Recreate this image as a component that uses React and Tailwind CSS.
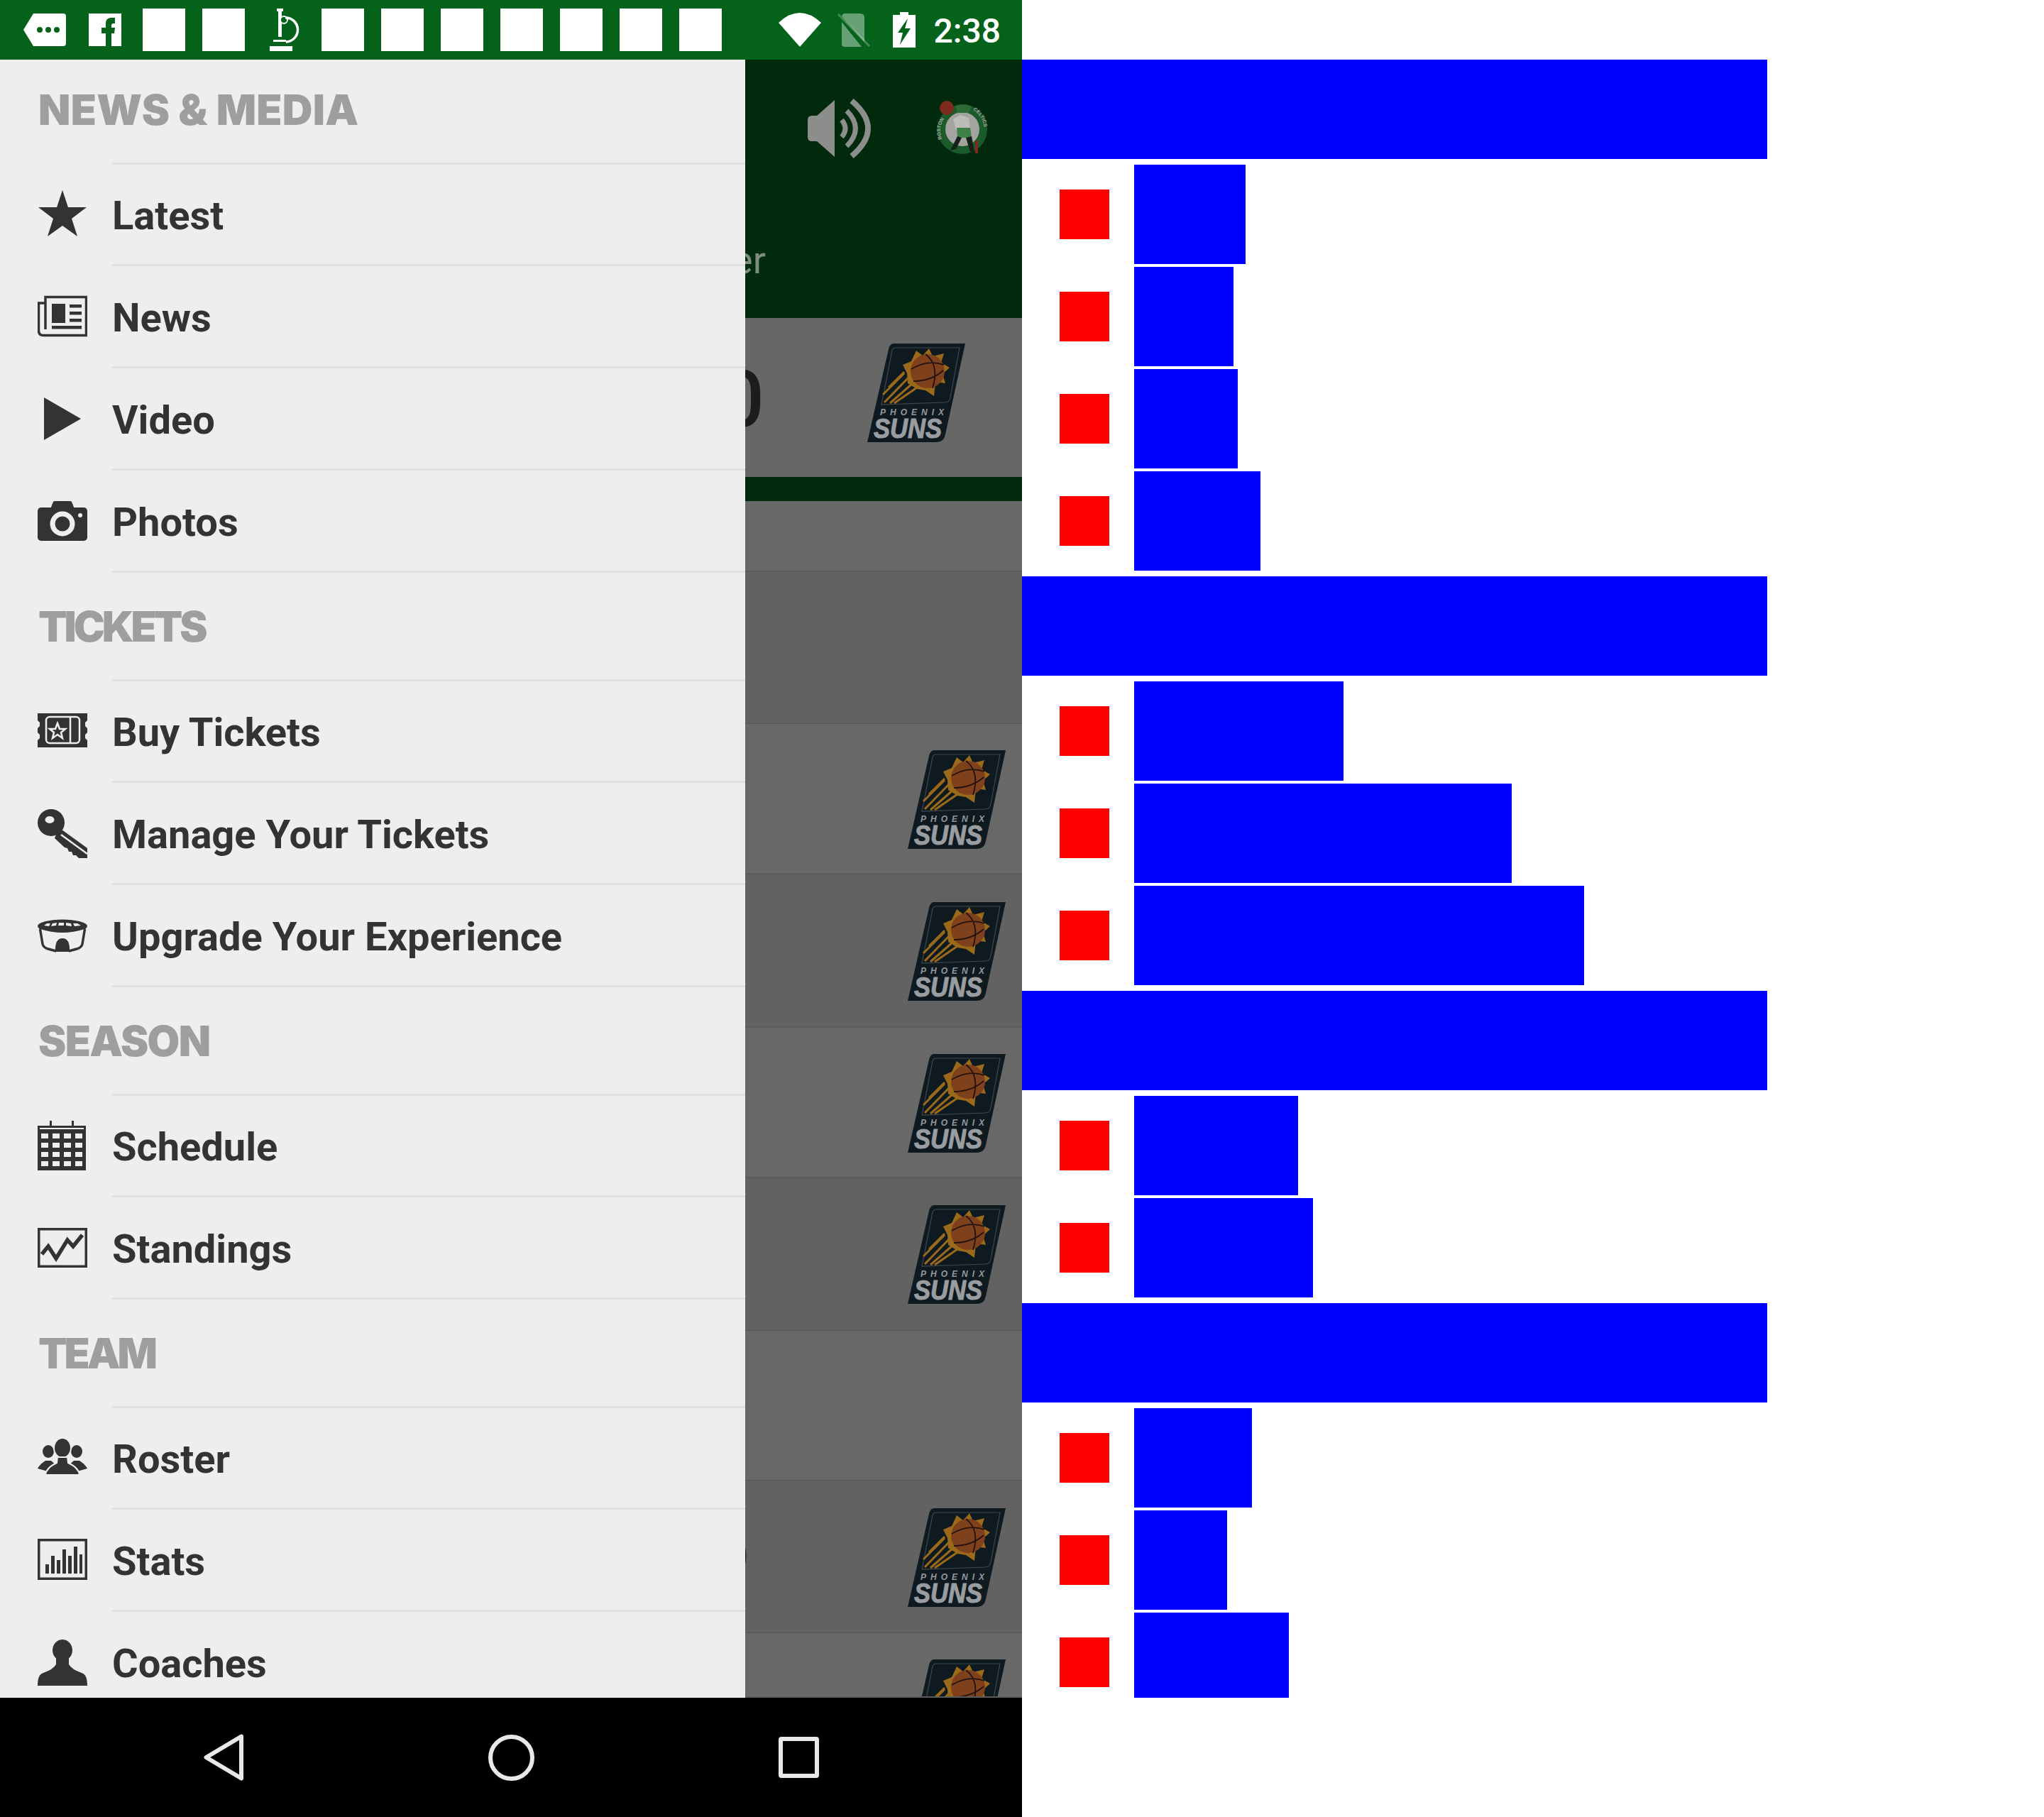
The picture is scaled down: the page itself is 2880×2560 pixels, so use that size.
const drawerSections = [
  {
    title: "NEWS & MEDIA",
    titleClass: "tracking-[0.3px]",
    items: [
      { label: "Latest", icon: "star" },
      { label: "News", icon: "news" },
      { label: "Video", icon: "play" },
      { label: "Photos", icon: "camera" },
    ],
  },
  {
    title: "TICKETS",
    titleClass: "tracking-[-4px]",
    items: [
      { label: "Buy Tickets", icon: "ticket" },
      { label: "Manage Your Tickets", icon: "key" },
      { label: "Upgrade Your Experience", icon: "stadium" },
    ],
  },
  {
    title: "SEASON",
    titleClass: "tracking-[-1.6px]",
    items: [
      { label: "Schedule", icon: "calendar" },
      { label: "Standings", icon: "chart" },
    ],
  },
  {
    title: "TEAM",
    titleClass: "tracking-[-4px]",
    items: [
      { label: "Roster", icon: "roster" },
      { label: "Stats", icon: "stats" },
      { label: "Coaches", icon: "coach" },
    ],
  },
];

// widths of the overlay bars, one list per section
const overlayWidths = [
  [157, 140, 146, 178],
  [295, 532, 634],
  [231, 252],
  [166, 131, 218],
];

const listRows = [
  { h: "h-[100px]", bg: "bg-[#686868]" },
  { h: "h-[214px]", bg: "bg-[#626262]" },
  { h: "h-[212px]", bg: "bg-[#686868]", logo: true },
  { h: "h-[216px]", bg: "bg-[#626262]", logo: true },
  { h: "h-[212px]", bg: "bg-[#686868]", logo: true },
  { h: "h-[215px]", bg: "bg-[#626262]", logo: true },
  { h: "h-[212px]", bg: "bg-[#686868]" },
  { h: "h-[214px]", bg: "bg-[#626262]", logo: true, sliver: true },
  { h: "h-[91px]", bg: "bg-[#686868]", logo: true, clipped: true },
];

const INK = "#333333";
const BG = "#eeeeee";

function DrawerIcon({ name }) {
  const calendarCells = [];
  [18, 31, 44, 57].forEach((y) =>
    [5, 21, 37, 53].forEach((x) => calendarCells.push([x, y]))
  );

  return (
    <svg viewBox="0 0 70 70" className="w-[70px] h-[70px] shrink-0" fill={INK}>
      {name === "star" && (
        <polygon points="35,1 43,25 69,25 48,41 56,66 35,51 14,66 22,41 1,25 27,25" />
      )}
      {name === "news" && (
        <g>
          <path d="M11 16V7.500H68.500V61.500H8Q1.500 61.500 1.500 55V16H11V53" fill="none" stroke={INK} strokeWidth="3.500" />
          <rect x="20" y="17" width="19" height="27" />
          <rect x="45" y="18" width="17" height="4.500" />
          <rect x="45" y="28" width="17" height="4.500" />
          <rect x="45" y="38" width="17" height="4.500" />
          <rect x="20" y="48" width="42" height="4.500" />
        </g>
      )}
      {name === "play" && <polygon points="9,5 61,35 9,65" />}
      {name === "camera" && (
        <g>
          <rect x="0" y="16" width="70" height="47" rx="5" />
          <path d="M18 18L22 8Q22.500 7 24 7H46Q47.500 7 48 8L52 18Z" />
          <circle cx="35" cy="39" r="14" fill="none" stroke={BG} strokeWidth="7" />
          <circle cx="60" cy="27" r="3" fill={BG} />
        </g>
      )}
      {name === "ticket" && (
        <g>
          <path d="M0 10H70V20L67 23V28L70 31V37L67 40V45L70 48V58H0V48L3 45V40L0 37V31L3 28V23L0 20Z" />
          <rect x="12" y="15" width="47" height="37" rx="5" fill="none" stroke={BG} strokeWidth="2.500" />
          <path d="M46 15V52" stroke={BG} strokeWidth="2.500" />
          <polygon points="28,24 31,32 39,32 33,37 35,45 28,40 21,45 23,37 17,32 25,32" fill="none" stroke={BG} strokeWidth="2.500" />
        </g>
      )}
      {name === "key" && (
        <g>
          <ellipse cx="19" cy="20" rx="19" ry="19" />
          <path d="M30 27L70 56V70H58L54 66L50 66L48 61L44 61L42 56L38 55L24 42Z" />
          <ellipse cx="17" cy="16" rx="6.500" ry="5" fill={BG} />
          <path d="M33 37L70 64" stroke={BG} strokeWidth="2.500" />
        </g>
      )}
      {name === "stadium" && (
        <g>
          <ellipse cx="35" cy="22" rx="35" ry="9.500" />
          <path d="M9 21L13 18H18L16 22ZM21 18L27 17L26 21L19 22ZM30 17H37L37 21H29ZM40 17L47 18L48 22L40 21ZM50 18H56L61 21L52 22Z" fill={BG} />
          <path d="M4 26Q35 36 66 26L64 29Q35 38 6 29Z" fill={BG} />
          <path d="M3.500 26L7 47Q8 52 15 54L26 57M66.500 26L63 47Q62 52 55 54L44 57" fill="none" stroke={INK} strokeWidth="3.500" />
          <path d="M25 58Q24 39 35 39Q46 39 45 58Z" />
        </g>
      )}
      {name === "calendar" && (
        <g>
          <rect x="17" y="0" width="3" height="10" />
          <rect x="48" y="0" width="3" height="10" />
          <rect x="0" y="7" width="68" height="63" />
          <rect x="3" y="10" width="62" height="2" fill={BG} />
          {calendarCells.map(([x, y]) => (
            <rect key={`${x}-${y}`} x={x} y={y} width="10" height="7" fill={BG} />
          ))}
        </g>
      )}
      {name === "chart" && (
        <g>
          <rect x="1.750" y="8.750" width="66.500" height="52.500" fill="none" stroke={INK} strokeWidth="3.500" />
          <polyline points="6,44 15,33 26,50 42,24 50,33 63,17" fill="none" stroke={INK} strokeWidth="5.500" />
        </g>
      )}
      {name === "roster" && (
        <g>
          <ellipse cx="15" cy="26" rx="8" ry="9" />
          <ellipse cx="55" cy="26" rx="8" ry="9" />
          <path d="M0 50Q3 44 11 39L19 39L27 46L14 54Z" />
          <path d="M70 50Q67 44 59 39L51 39L43 46L56 54Z" />
          <ellipse cx="35" cy="21" rx="12" ry="14" stroke={BG} strokeWidth="2" />
          <path d="M11 59Q12 49 27 42L28 34H42L43 42Q58 49 59 59Z" stroke={BG} strokeWidth="2" />
        </g>
      )}
      {name === "stats" && (
        <g>
          <rect x="1.750" y="6.750" width="66.500" height="54.500" fill="none" stroke={INK} strokeWidth="3.500" />
          <rect x="11" y="41" width="5" height="13" />
          <rect x="19" y="29" width="5" height="25" />
          <rect x="27" y="35" width="5" height="19" />
          <rect x="35" y="20" width="5" height="34" />
          <rect x="43" y="29" width="5" height="25" />
          <rect x="51" y="16" width="5" height="38" />
          <rect x="59" y="27" width="4" height="27" />
        </g>
      )}
      {name === "coach" && (
        <g>
          <ellipse cx="35" cy="18" rx="14" ry="15" />
          <path d="M26 28V38Q22 45 8 50Q0 52 0 68H70Q70 52 62 50Q48 45 44 38V28Z" />
        </g>
      )}
    </svg>
  );
}

function SectionDivider() {
  return <div className="ml-[157px] h-[3px] bg-[#e1e1e1]" />;
}

function Drawer() {
  return (
    <div className="w-[1050px] bg-[#eeeeee] overflow-hidden shrink-0">
      {drawerSections.map((section) => (
        <section key={section.title} className="pb-1">
          <h2 className={`h-[140px] mb-[5px] pl-[54px] pt-[2px] flex items-center font-['Inter',sans-serif] font-black text-[59px] text-[#9e9e9e] whitespace-nowrap ${section.titleClass}`}>
            {section.title}
          </h2>
          <SectionDivider />
          {section.items.map((item) => (
            <div key={item.label} className="pb-px">
              <div className="h-[140px] pl-[53px] flex items-center">
                <DrawerIcon name={item.icon} />
                <span className="ml-[35px] pt-[3px] font-['Roboto',sans-serif] font-bold text-[56px] text-[#333333] whitespace-nowrap">
                  {item.label}
                </span>
              </div>
              <SectionDivider />
            </div>
          ))}
        </section>
      ))}
    </div>
  );
}

function SunsLogo() {
  return (
    <svg viewBox="0 0 138 140" className="w-[138px] h-[140px] shrink-0">
      <path d="M37 0H138L110 128Q108 139 98 139H0L30 8Q32 0 37 0Z" fill="#0f1a20" />
      <path d="M40 6H130L117 76Q116 83 109 83L20 86L35 10Q36 6 40 6Z" fill="none" stroke="#3e484d" strokeWidth="1.200" />
      <path d="M24 83L58 48M32 84L64 56M22 72L52 42M38 84L70 62M30 62L52 40" stroke="#9a6a1a" strokeWidth="3" />
      <polygon points="69,10 78,17 87,7 92,18 108,14 104,27 116,34 106,43 110,56 96,54 94,74 82,66 70,64 57,56 56,42 50,30 62,25" fill="#9a6a1a" />
      <circle cx="85" cy="39" r="24" fill="#7f411b" />
      <path d="M62 36Q85 22 108 30M65 53Q90 53 107 38M82 15Q102 30 92 63" fill="none" stroke="#241210" strokeWidth="1.800" />
      <text x="18" y="101" textLength="90" lengthAdjust="spacing" fontFamily="'Liberation Sans', sans-serif" fontStyle="italic" fontWeight="700" fontSize="12" fill="#94989b">
        PHOENIX
      </text>
      <text x="9" y="133" textLength="96" lengthAdjust="spacingAndGlyphs" fontFamily="'Liberation Sans', sans-serif" fontStyle="italic" fontWeight="700" fontSize="38" fill="#999da0" stroke="#999da0" strokeWidth="1">
        SUNS
      </text>
    </svg>
  );
}

function CelticsLogo() {
  return (
    <svg viewBox="0 0 74 76" className="w-[74px] h-[76px] shrink-0">
      <circle cx="37" cy="40" r="35" fill="#1b5a2b" />
      <circle cx="37" cy="40" r="24" fill="#a3a49f" />
      <circle cx="15" cy="10" r="10" fill="#7d2a1f" />
      <path d="M27 8Q38 2 50 8L46 17H30Z" fill="#2c6b36" />
      <path d="M24 26L34 20L46 24L48 40L28 42Z" fill="#bdbcb6" />
      <path d="M29 38H48L50 52H30Z" fill="#3f8046" />
      <path d="M30 50L36 52L28 68L20 70ZM42 52L50 50L54 72L48 72Z" fill="#15201a" />
      <path id="celtics-arc-left" d="M8 54A31 31 0 0 1 14 22" fill="none" />
      <path id="celtics-arc-right" d="M52 13A31 31 0 0 1 67 44" fill="none" />
      <text fontFamily="'Liberation Sans', sans-serif" fontWeight="700" fontSize="7" fill="#a5a8a2">
        <textPath href="#celtics-arc-left">BOSTON</textPath>
      </text>
      <text fontFamily="'Liberation Sans', sans-serif" fontWeight="700" fontSize="7" fill="#a5a8a2">
        <textPath href="#celtics-arc-right">CELTICS</textPath>
      </text>
      <rect x="55" y="56" width="4" height="18" fill="#7d2a1f" />
    </svg>
  );
}

function Speaker() {
  return (
    <svg viewBox="0 0 90 84" className="w-[90px] h-[84px] shrink-0">
      <path d="M0 30Q0 24 6 24H13L38 2V82L13 60H6Q0 60 0 54Z" fill="#8b8e8b" />
      <path d="M48 30Q58 42 48 54" fill="none" stroke="#8b8e8b" strokeWidth="7" />
      <path d="M55 17Q80 42 55 67" fill="none" stroke="#8b8e8b" strokeWidth="7" />
      <path d="M62 3Q108 42 62 81" fill="none" stroke="#8b8e8b" strokeWidth="8" />
    </svg>
  );
}

function ClippedText({ width, children, className }) {
  return (
    <div className={`${width} flex justify-end overflow-hidden`}>
      <span className={`shrink-0 whitespace-nowrap font-['Roboto',sans-serif] ${className}`}>{children}</span>
    </div>
  );
}

function BackScreen() {
  return (
    <div className="flex-1 flex flex-col overflow-hidden">
      <div className="h-[364px] bg-[#012a0c] shrink-0">
        <div className="h-[139px] pt-[55px] pl-[88px] flex items-start">
          <Speaker />
          <div className="ml-[91px] mt-[3px]">
            <CelticsLogo />
          </div>
        </div>
        <div className="mt-[112px]">
          <ClippedText width="w-[29px]" className="text-[54px] leading-[64px] text-[#7d8e81]">
            er
          </ClippedText>
        </div>
      </div>
      <div className="h-[224px] bg-[#676767] shrink-0 flex items-center justify-between pr-[80px]">
        <div className="pt-[6px]">
          <ClippedText width="w-[27px]" className="text-[112px] leading-[120px] font-medium text-[#1c1c1c]">
            0
          </ClippedText>
        </div>
        <div className="pb-[12px]">
          <SunsLogo />
        </div>
      </div>
      <div className="h-[34px] bg-[#012a0c] shrink-0" />
      {listRows.map((row, index) => (
        <div
          key={index}
          className={`${row.h} ${row.bg} shrink-0 border-b-2 border-[#5b5b5b] flex justify-between overflow-hidden ${row.clipped ? "items-start pt-[37px]" : "items-center"}`}
        >
          <div>
            {row.sliver && (
              <ClippedText width="w-[4px]" className="text-[48px] leading-[56px] text-[#1c1c1c]">
                0
              </ClippedText>
            )}
          </div>
          {row.logo && (
            <div className={row.clipped ? "pr-[23px]" : "pr-[23px] pt-[3px]"}>
              <SunsLogo />
            </div>
          )}
        </div>
      ))}
    </div>
  );
}

function StatusBar() {
  const green = "#04621b";
  return (
    <div className="h-[84px] bg-[#04621b] flex items-center justify-between pl-[33px] pr-[30px] shrink-0">
      <div className="flex items-center gap-6">
        <svg viewBox="0 0 60 46" className="w-[60px] h-[46px]">
          <path d="M14 0H56Q60 0 60 4V42Q60 46 56 46H14L0 23Z" fill="#ffffff" />
          <circle cx="23" cy="23" r="4" fill={green} />
          <circle cx="35" cy="23" r="4" fill={green} />
          <circle cx="47" cy="23" r="4" fill={green} />
        </svg>
        <div className="w-[60px] flex justify-center pl-[2px]">
          <svg viewBox="0 0 46 46" className="w-[46px] h-[46px]">
            <rect width="46" height="46" fill="#ffffff" />
            <path d="M24 46V28H18V20H24V14Q24 6 32 6H37V14H35Q32 14 32 17V20H37L36 28H32V46Z" fill={green} />
          </svg>
        </div>
        <div className="w-[60px] h-[60px] bg-white" />
        <div className="w-[60px] h-[60px] bg-white" />
        <svg viewBox="0 0 60 60" className="w-[60px] h-[60px]" fill="#ffffff">
          <rect x="21" y="0" width="9" height="4" />
          <rect x="23" y="4" width="5" height="36" />
          <circle cx="31" cy="16" r="5" fill={green} stroke="#ffffff" strokeWidth="2" />
          <path d="M33 13A17 17 0 0 1 34 47" fill="none" stroke="#ffffff" strokeWidth="3.500" />
          <rect x="16" y="44" width="18" height="3" />
          <rect x="11" y="53" width="32" height="7" />
        </svg>
        {[0, 1, 2, 3, 4, 5, 6].map((n) => (
          <div key={n} className="w-[60px] h-[60px] bg-white" />
        ))}
      </div>
      <div className="flex items-center">
        <svg viewBox="0 0 60 48" className="w-[60px] h-[48px]">
          <path d="M0 14Q30 -14 60 14L30 48Z" fill="#ffffff" />
        </svg>
        <svg viewBox="0 0 46 47" className="w-[46px] h-[47px] ml-[23px]">
          <path d="M10 0H32Q38 0 38 6V40L6 4Q7 0 10 0ZM6 12L34 47H10Q6 47 6 43Z" fill="#ffffff" fillOpacity="0.4" />
          <path d="M1 1L45 46" stroke="#ffffff" strokeOpacity="0.25" strokeWidth="3" />
        </svg>
        <svg viewBox="0 0 32 50" className="w-[32px] h-[50px] ml-[32px]">
          <path d="M10 0H22V4H32V50H0V4H10Z" fill="#ffffff" />
          <path d="M21 9L7 29H14L10 46L25 23H17Z" fill={green} />
        </svg>
        <span className="ml-[26px] pt-[3px] font-['Roboto',sans-serif] font-medium text-[48px] leading-none text-white">
          2:38
        </span>
      </div>
    </div>
  );
}

function NavBar() {
  return (
    <div className="h-[168px] bg-black shrink-0 flex items-center justify-center">
      <div className="w-[405px] flex justify-center">
        <svg viewBox="0 0 56 66" className="w-[56px] h-[66px]">
          <path d="M53 3.500L3.500 33L53 62.500Z" fill="none" stroke="#e8e8e8" strokeWidth="6" strokeLinejoin="round" />
        </svg>
      </div>
      <div className="w-[405px] flex justify-center">
        <div className="w-[65px] h-[65px] rounded-full border-[6px] border-[#e8e8e8]" />
      </div>
      <div className="w-[405px] flex justify-center">
        <div className="w-[57px] h-[58px] rounded-[4px] border-[6px] border-[#e8e8e8]" />
      </div>
    </div>
  );
}

function OverlayColumn() {
  return (
    <div className="w-[1050px] pt-[84px] shrink-0">
      {overlayWidths.map((widths, i) => (
        <div key={i} className="mb-2 flex flex-col gap-1">
          <div className="h-[140px] mb-1 bg-[#0000ff]" />
          {widths.map((w, j) => (
            <div key={j} className="h-[140px] flex items-center pl-[53px]">
              <div className="w-[70px] h-[70px] bg-[#ff0000] shrink-0" />
              <div className="ml-[35px] h-[140px] bg-[#0000ff]" style={{ width: w }} />
            </div>
          ))}
        </div>
      ))}
    </div>
  );
}

export default function App() {
  return (
    <div className="w-[2880px] h-[2560px] bg-white flex overflow-hidden">
      <div className="w-[1440px] h-[2560px] flex flex-col shrink-0">
        <StatusBar />
        <div className="flex h-[2308px] overflow-hidden">
          <Drawer />
          <BackScreen />
        </div>
        <NavBar />
      </div>
      <div className="h-[2392px] overflow-hidden">
        <OverlayColumn />
      </div>
    </div>
  );
}
